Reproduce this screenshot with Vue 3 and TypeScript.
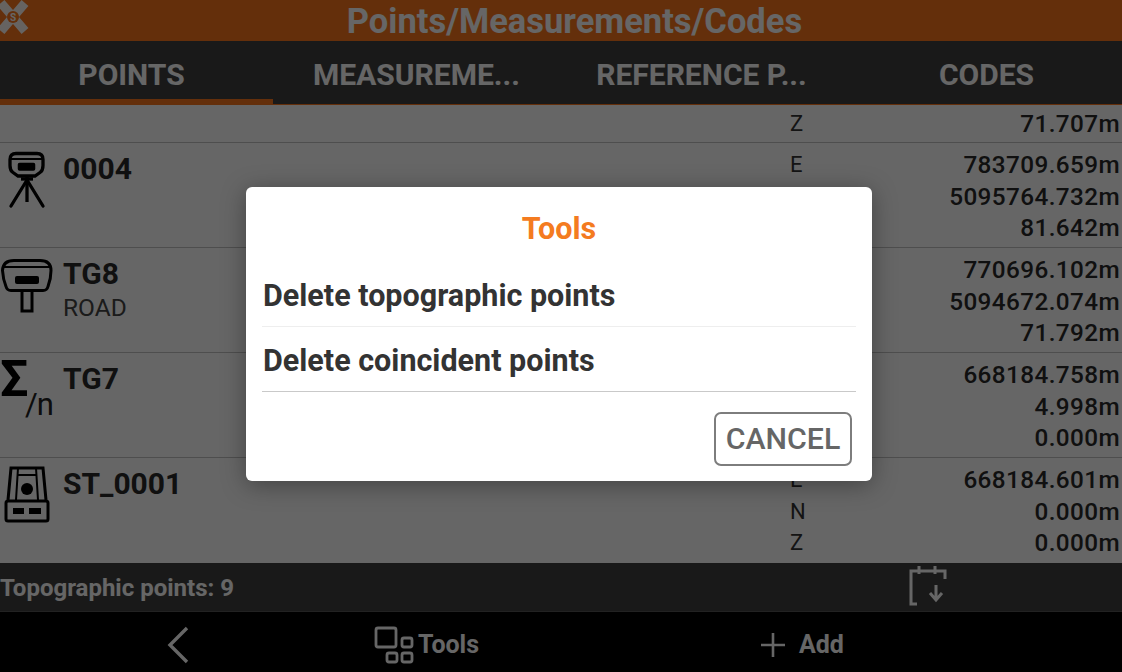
<script setup lang="ts">
type PointRow = {
  name: string
  code?: string
  icon: 'rover' | 'gnss' | 'mean' | 'station'
  coords: [string, string][]
}

const tabs = ['POINTS', 'MEASUREME...', 'REFERENCE P...', 'CODES']

const rows: PointRow[] = [
  {
    name: '0004',
    icon: 'rover',
    coords: [['E', '783709.659m'], ['N', '5095764.732m'], ['Z', '81.642m']],
  },
  {
    name: 'TG8',
    code: 'ROAD',
    icon: 'gnss',
    coords: [['E', '770696.102m'], ['N', '5094672.074m'], ['Z', '71.792m']],
  },
  {
    name: 'TG7',
    icon: 'mean',
    coords: [['E', '668184.758m'], ['N', '4.998m'], ['Z', '0.000m']],
  },
  {
    name: 'ST_0001',
    icon: 'station',
    coords: [['E', '668184.601m'], ['N', '0.000m'], ['Z', '0.000m']],
  },
]
</script>

<template>
  <div class="screen">
    <header class="title-bar">
      <svg class="logo" width="30" height="34" viewBox="0 0 30 34">
        <path d="M1 3l24 28M25 3L1 31" stroke="#fff" stroke-width="9" fill="none" opacity="0.95" />
        <circle cx="13" cy="17" r="6" fill="#fa761c" />
        <text x="13" y="20.500" text-anchor="middle" font-size="10" font-weight="700" fill="#fff">S</text>
      </svg>
      <span>Points/Measurements/Codes</span>
    </header>

    <nav class="tabs">
      <div v-for="(tab, i) in tabs" :key="tab" class="tab" :class="{ active: i === 0 }">{{ tab }}</div>
    </nav>

    <section class="list">
      <div class="row partial">
        <div class="coords">
          <div class="coord"><span class="axis">Z</span><span class="value">71.707m</span></div>
        </div>
      </div>

      <div v-for="row in rows" :key="row.name" class="row">
        <div class="icon">
          <svg v-if="row.icon === 'rover'" width="50" height="60" viewBox="0 0 50 60" fill="none" stroke="#000" stroke-width="3.300">
            <path d="M16 3.500h21q6 0 6 6v6q0 5-3 7l-5 3.500H18l-5-3.500q-3-2-3-7v-6q0-6 6-6z" />
            <path d="M10 9h33" stroke-width="2" />
            <rect x="18.500" y="13.500" width="16" height="6.500" rx="1" fill="#000" stroke-width="1.500" />
            <path d="M21 29h12" />
            <path d="M27 27v25" />
            <path d="M27 30L11 56M27 30l16 26" stroke-linecap="round" />
          </svg>
          <svg v-else-if="row.icon === 'gnss'" width="54" height="60" viewBox="0 0 54 60" fill="none" stroke="#000" stroke-width="3">
            <path d="M14 5.500h26q11 0 11 10q0 8-3 16q-1 4-5 4H11q-4 0-5-4Q3 24 2.500 15.500Q3 5.500 14 5.500z" />
            <path d="M3 12h48" stroke-width="2" />
            <rect x="15" y="21" width="24" height="8" rx="2" fill="#000" stroke="none" />
            <path d="M22 37v19h10V37" />
          </svg>
          <div v-else-if="row.icon === 'mean'" class="mean">
            <span class="sigma">Σ</span><span class="per-n">/n</span>
          </div>
          <svg v-else width="54" height="60" viewBox="0 0 54 60" fill="none" stroke="#000" stroke-width="3">
            <path d="M8 35L11 3h32l3 32" />
            <path d="M18 3l-2 32M36 3l2 32M18 10h18" stroke-width="2" />
            <circle cx="27" cy="24" r="6" fill="#000" stroke="none" />
            <rect x="6" y="36" width="42" height="20" rx="2" />
            <rect x="13" y="43" width="11" height="6" fill="#000" stroke="none" />
            <rect x="29" y="43" width="12" height="6" fill="#000" stroke="none" />
          </svg>
        </div>
        <div class="names">
          <div class="name">{{ row.name }}</div>
          <div v-if="row.code" class="code">{{ row.code }}</div>
        </div>
        <div class="coords">
          <div v-for="c in row.coords" :key="c[0]" class="coord">
            <span class="axis">{{ c[0] }}</span><span class="value">{{ c[1] }}</span>
          </div>
        </div>
      </div>
    </section>

    <div class="status">
      <span class="status-text">Topographic points: 9</span>
      <svg class="calendar" width="40" height="42" viewBox="0 0 40 42" fill="none" stroke="#fff" stroke-width="3">
        <path d="M9 40H3V7h34v8" />
        <path d="M11 2v8M27 2v8" />
        <path d="M28 21v14M22 29l6 7 6-7" />
      </svg>
    </div>

    <footer class="bottom">
      <div class="slot back">
        <svg width="24" height="38" viewBox="0 0 24 38" fill="none" stroke="#fff" stroke-width="3.400">
          <path d="M21 2L4 19l17 17" />
        </svg>
      </div>
      <div class="slot tools">
        <svg width="40" height="38" viewBox="0 0 40 38" fill="none" stroke="#fff" stroke-width="2.800">
          <rect x="2" y="2" width="20" height="19" rx="2" />
          <rect x="28" y="12" width="10" height="9" rx="2" />
          <rect x="13" y="27" width="10" height="9" rx="2" />
          <rect x="28" y="27" width="10" height="9" rx="2" />
        </svg>
        <span>Tools</span>
      </div>
      <div class="slot add">
        <svg width="26" height="26" viewBox="0 0 26 26" stroke="#fff" stroke-width="2.600">
          <path d="M13 1v24M1 13h24" />
        </svg>
        <span>Add</span>
      </div>
    </footer>

    <div class="scrim">
      <div class="dialog">
        <h2>Tools</h2>
        <div class="option first">Delete topographic points</div>
        <div class="option">Delete coincident points</div>
        <div class="actions">
          <button type="button">CANCEL</button>
        </div>
      </div>
    </div>
  </div>
</template>

<style scoped>
.screen {
  position: relative;
  width: 1122px;
  height: 672px;
  overflow: hidden;
  display: flex;
  flex-direction: column;
  background: #fff;
  font-family: Roboto, "Liberation Sans", sans-serif;
  color: #2a2a2a;
}

.title-bar {
  height: 41px;
  flex: none;
  display: flex;
  align-items: center;
  justify-content: center;
  padding-left: 27px;
  box-sizing: border-box;
  position: relative;
  background: #fa761c;
  color: #fff;
  font-size: 34.500px;
  font-weight: 700;
}

.logo {
  position: absolute;
  left: 0;
  top: 0;
}

.tabs {
  height: 64px;
  flex: none;
  display: flex;
  margin-left: -11px;
  background: #404040;
  border-bottom: 1px solid #fa761c;
  box-sizing: border-box;
}

.tab {
  flex: none;
  position: relative;
  width: 285px;
  box-sizing: border-box;
  padding-top: 4px;
  display: flex;
  align-items: center;
  justify-content: center;
  color: #fff;
  font-size: 30px;
  font-weight: 700;
}

.tab.active::after {
  content: '';
  position: absolute;
  left: 0;
  right: 1px;
  bottom: -1px;
  height: 6px;
  background: #fa761c;
}

.list {
  flex: 1;
  min-height: 0;
}

.row {
  height: 105px;
  box-sizing: border-box;
  display: flex;
  border-bottom: 1px solid #c4c4c4;
}

.row:last-child {
  border-bottom: none;
}

.row.partial {
  height: 38px;
  justify-content: flex-end;
  padding-top: 3px;
}

.icon {
  width: 64px;
  flex: none;
  padding-top: 7px;
  display: flex;
  justify-content: flex-start;
  align-items: flex-start;
  box-sizing: border-box;
}

.names {
  flex: 1;
  padding-top: 8px;
  margin-left: -1px;
}

.name {
  font-size: 30px;
  font-weight: 700;
  line-height: 36px;
}

.code {
  font-size: 24.500px;
  line-height: 31px;
  color: #444;
}

.mean {
  width: 64px;
  position: relative;
  height: 70px;
}

.sigma {
  position: absolute;
  left: 0;
  top: -10px;
  font-size: 50px;
  font-weight: 700;
  color: #000;
}

.per-n {
  position: absolute;
  left: 25px;
  top: 26px;
  font-size: 31px;
  letter-spacing: -1px;
  color: #222;
}

.coords {
  width: 332px;
  flex: none;
  padding-top: 6px;
}

.partial .coords {
  padding-top: 0;
}

.coord {
  display: flex;
  justify-content: space-between;
  height: 31.500px;
  line-height: 31.500px;
  padding-right: 2px;
}

.axis {
  font-size: 22px;
  color: #333;
}

.value {
  font-size: 24.300px;
  font-weight: 500;
  letter-spacing: 0.4px;
}

.status {
  height: 49px;
  flex: none;
  display: flex;
  align-items: center;
  justify-content: space-between;
  background: #404040;
  color: #fff;
  box-sizing: border-box;
  border-bottom: 1px solid #555;
}

.status-text {
  font-size: 24px;
  font-weight: 700;
  padding-top: 2px;
}

.calendar {
  margin-right: 174px;
  margin-top: -4px;
}

.bottom {
  height: 60px;
  flex: none;
  box-sizing: border-box;
  padding-top: 5px;
  display: flex;
  background: #000;
  color: #fff;
  font-size: 25px;
  font-weight: 700;
}

.slot {
  display: flex;
  align-items: center;
}

.back {
  margin-left: 166px;
  width: 208px;
}

.tools {
  width: 386px;
  gap: 4px;
}

.add {
  gap: 13px;
}

.scrim {
  position: absolute;
  inset: 0;
  background: rgba(0, 0, 0, 0.6);
  display: flex;
  align-items: flex-start;
  justify-content: center;
}

.dialog {
  width: 626px;
  height: 294px;
  margin-top: 187px;
  margin-left: -4px;
  box-sizing: border-box;
  padding: 0 16px;
  background: #fff;
  border-radius: 6px;
  box-shadow: 0 4px 24px rgba(0, 0, 0, 0.35);
}

h2 {
  margin: 0;
  height: 75px;
  padding-top: 24px;
  box-sizing: border-box;
  text-align: center;
  color: #f47b20;
  font-size: 30.500px;
  line-height: 36px;
  font-weight: 700;
}

.option {
  height: 65px;
  box-sizing: border-box;
  padding: 16px 0 0 1px;
  font-size: 30.500px;
  line-height: 36px;
  font-weight: 700;
  color: #333;
  border-bottom: 1px solid #c9c9c9;
}

.option.first {
  border-bottom-color: #eee;
}

.actions {
  display: flex;
  justify-content: flex-end;
  padding: 20px 4px 0 0;
}

button {
  width: 138px;
  height: 54px;
  padding: 0 0 2px;
  background: #fff;
  border: 2px solid #7d7d7d;
  border-radius: 7px;
  color: #666;
  font-family: inherit;
  font-size: 30.300px;
  font-weight: 500;
}
</style>
